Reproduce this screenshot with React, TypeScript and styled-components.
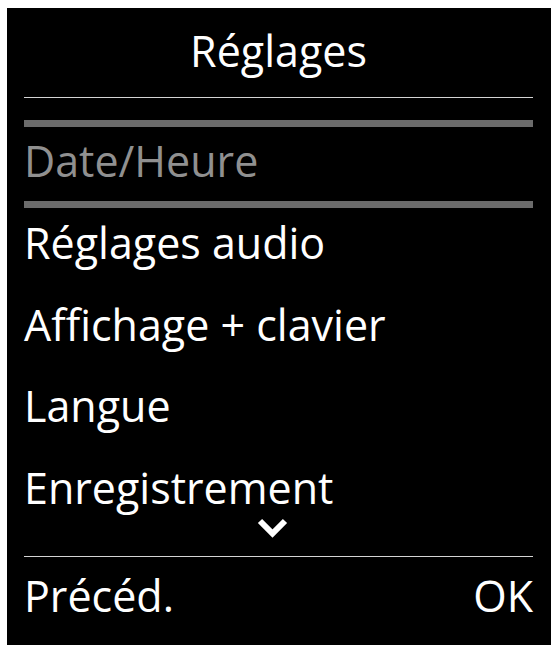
import React from "react";
import styled, { createGlobalStyle } from "styled-components";

const GlobalStyle = createGlobalStyle`
  html, body {
    margin: 0;
    padding: 0;
    background: #ffffff;
  }
  body {
    font-family: "Open Sans", "Noto Sans", "DejaVu Sans", sans-serif;
  }
`;

const Screen = styled.div`
  margin: 8px 0 0 7px;
  width: 544px;
  height: 637px;
  box-sizing: border-box;
  padding: 0 18px 0 17px;
  background: #000000;
  color: #ffffff;
  display: flex;
  flex-direction: column;
  font-size: 43px;
  overflow: hidden;
`;

const Title = styled.div`
  text-align: center;
  line-height: 86px;
  height: 86px;
`;

const Rule = styled.div<{ $top: number }>`
  height: 1px;
  margin-top: ${(p) => p.$top}px;
  background: #d4d4d4;
  flex-shrink: 0;
`;

const Menu = styled.ul`
  list-style: none;
  margin: 22px 0 0;
  padding: 0;
  display: flex;
  flex-direction: column;
  gap: 11.5px;
`;

const Item = styled.li`
  white-space: nowrap;
  line-height: 70px;
  height: 70px;

  &[data-selected="true"] {
    color: #909090;
    border-top: 7px solid #6b6b6b;
    border-bottom: 7px solid #6b6b6b;
    line-height: 67px;
    height: 67px;
    padding-bottom: 7px;
    margin-bottom: -11.5px;
  }
`;

const ScrollHint = styled.div`
  display: flex;
  justify-content: center;
  margin-top: -8.5px;
  padding-right: 12px;
  height: 26px;
  flex-shrink: 0;
`;

const SoftKeys = styled.div`
  display: flex;
  justify-content: space-between;
  align-items: baseline;
  line-height: 78px;
`;

const SoftKey = styled.span``;

const items = [
  "Date/Heure",
  "Réglages audio",
  "Affichage + clavier",
  "Langue",
  "Enregistrement",
];

function ChevronDown() {
  return (
    <svg width="40" height="26" viewBox="0 0 40 26">
      <path
        d="M7 7 L19.5 19.5 L32 7"
        fill="none"
        stroke="#ffffff"
        strokeWidth="6"
        strokeLinecap="butt"
        strokeLinejoin="miter"
      />
    </svg>
  );
}

export default function App() {
  return (
    <>
      <GlobalStyle />
      <Screen>
        <Title>Réglages</Title>
        <Rule $top={3} />
        <Menu>
          {items.map((label, i) => (
            <Item key={label} data-selected={i === 0 ? "true" : "false"}>
              {label}
            </Item>
          ))}
        </Menu>
        <ScrollHint>
          <ChevronDown />
        </ScrollHint>
        <Rule $top={16} />
        <SoftKeys>
          <SoftKey>Précéd.</SoftKey>
          <SoftKey>OK</SoftKey>
        </SoftKeys>
      </Screen>
    </>
  );
}
